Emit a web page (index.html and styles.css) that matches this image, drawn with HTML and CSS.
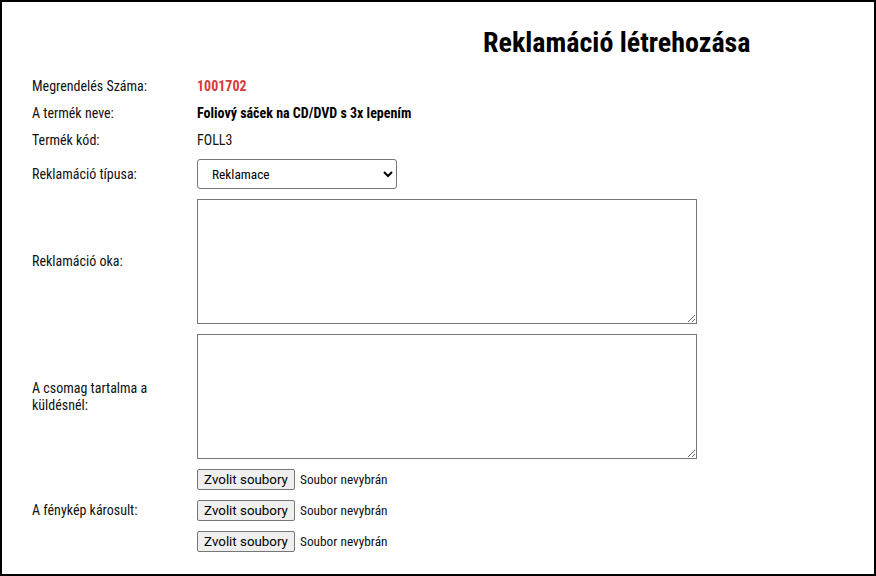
FILE: index.html
```html
<!DOCTYPE html>
<html lang="hu">
<head>
<meta charset="utf-8">
<title>Reklamáció létrehozása</title>
<link rel="stylesheet" href="styles.css">
</head>
<body>
<div class="page">
  <h1 class="title">Reklamáció létrehozása</h1>
  <div class="form">
    <div class="label">Megrendelés Száma:</div>
    <div class="value order">1001702</div>

    <div class="label">A termék neve:</div>
    <div class="value product">Foliový sáček na CD/DVD s 3x lepením</div>

    <div class="label">Termék kód:</div>
    <div class="value">FOLL3</div>

    <div class="label">Reklamáció típusa:</div>
    <div class="field">
      <select class="select">
        <option>Reklamace</option>
      </select>
    </div>

    <div class="label">Reklamáció oka:</div>
    <div class="field"><textarea class="area"></textarea></div>

    <div class="label">A csomag tartalma a küldésnél:</div>
    <div class="field"><textarea class="area"></textarea></div>

    <div class="label">A fénykép károsult:</div>
    <div class="field files">
      <div class="file"><button class="file-btn" type="button">Zvolit soubory</button><span class="file-name">Soubor nevybrán</span></div>
      <div class="file"><button class="file-btn" type="button">Zvolit soubory</button><span class="file-name">Soubor nevybrán</span></div>
      <div class="file"><button class="file-btn" type="button">Zvolit soubory</button><span class="file-name">Soubor nevybrán</span></div>
    </div>
  </div>
</div>
</body>
</html>
```
FILE: styles.css
```css
html, body {
  margin: 0;
  padding: 0;
  height: 100%;
}
body {
  font-family: "Roboto Condensed", Roboto, sans-serif;
  font-size: 14px;
  color: #111;
  background: #fff;
}
.page {
  box-sizing: border-box;
  height: 576px;
  border: 2px solid #000;
  padding: 24px 30px 0 30px;
}
.title {
  margin: 0 0 19px 451px;
  font-size: 28px;
  font-weight: 700;
  line-height: normal;
  color: #000;
}
.form {
  display: grid;
  grid-template-columns: 165px auto;
  row-gap: 10px;
  align-items: center;
}
.label {
  line-height: 17px;
  padding-right: 40px;
  color: #111;
}
.value {
  line-height: 17px;
}
.order {
  color: #d43a3a;
  font-weight: 700;
}
.product {
  font-weight: 700;
  color: #000;
}
.field {
  display: flex;
}
.select {
  width: 200px;
  height: 30px;
  box-sizing: border-box;
  border: 1px solid #767676;
  border-radius: 3px;
  background: #fff;
  font-family: "Roboto Condensed", Roboto, sans-serif;
  font-size: 13.33px;
  color: #000;
  padding: 0 6px 0 10px;
}
.area {
  box-sizing: border-box;
  width: 500px;
  height: 125px;
  border: 1px solid #767676;
  border-radius: 0;
  margin: 0;
  padding: 2px;
  font-family: "Roboto Condensed", Roboto, sans-serif;
}
.files {
  flex-direction: column;
  gap: 10px;
}
.file {
  display: flex;
  align-items: center;
  gap: 5px;
}
.file-btn {
  box-sizing: border-box;
  height: 21px;
  width: 98px;
  margin: 0;
  padding: 1px 6px;
  border: 1px solid #767676;
  border-radius: 2px;
  background: #efefef;
  font-family: Roboto, sans-serif;
  font-size: 13.33px;
  color: #000;
  white-space: nowrap;
}
.file-name {
  font-family: "Roboto Condensed", Roboto, sans-serif;
  font-size: 13.33px;
  color: #111;
}
```
